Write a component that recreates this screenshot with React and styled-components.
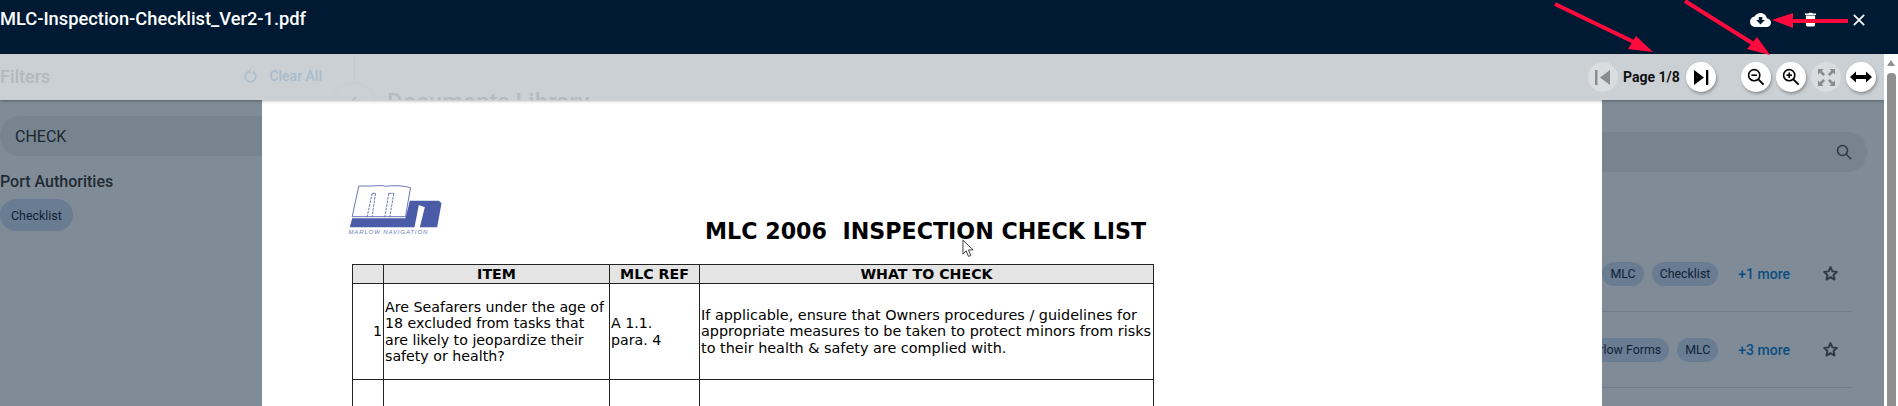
import React from "react";
import styled, { createGlobalStyle } from "styled-components";

const Global = createGlobalStyle`
  html, body { margin: 0; padding: 0; height: 100%; overflow: hidden; background: #7f8c97; }
  * { box-sizing: border-box; }
`;

const Screen = styled.div`
  position: relative; width: 1898px; height: 406px; overflow: hidden;
  display: flex; flex-direction: column; font-family: Roboto, sans-serif;
  background: #7f8c97;
`;
const TopBar = styled.header`
  height: 54px; flex: none; background: #001a33; color: #fff;
  display: flex; align-items: flex-start; padding: 6px 0 0 0;
`;
const FileName = styled.div`
  font-size: 18.3px; line-height: 25px; font-weight: 500; flex: 1;
`;
const TopIcons = styled.div`
  display: flex; align-items: center; height: 27px; margin-right: 33px; color: #fff;
`;
const CloudIcon = styled.svg`
  margin-right: 34px;
`;
const TrashIcon = styled.svg`
  margin-right: 37px;
`;
const Toolbar = styled.div`
  height: 46px; flex: none; background: #cbd0d5; display: flex; align-items: center;
  position: relative; z-index: 1; overflow: hidden; padding-right: 22px;
  box-shadow: 0 1px 3px rgba(0,0,0,.3);
`;
const FilterHead = styled.div`
  width: 354px; height: 100%; flex: none; display: flex; align-items: center;
  position: relative; padding-bottom: 3px;
  &::after {
    content: ""; position: absolute; right: -1px; top: 0; width: 1px; height: 26px; background: #c3c8cd;
  }
`;
const FilterTitle = styled.div`
  font-size: 18px; font-weight: 500; color: #b2b9bf; flex: 1; padding-top: 1px;
`;
const ClearAll = styled.div`
  display: flex; align-items: center; gap: 12px; font-size: 14px; font-weight: 500;
  color: #a9bccb; margin-right: 32px;
`;
const FaintTitle = styled.div`
  position: absolute; left: 387px; top: 34px; font-size: 24px; font-weight: 500; color: #b5bbc1;
  line-height: 28px; white-space: nowrap;
`;
const FaintBack = styled.div`
  position: absolute; left: 332px; top: 28px; width: 44px; height: 44px; border-radius: 50%;
  border: 1px solid #c7ccd1; color: #aebbc6; display: flex; align-items: center; justify-content: center;
`;
const Controls = styled.div`
  margin-left: auto; display: flex; align-items: center;
`;
const RoundButton = styled.button`
  width: 30px; height: 30px; border-radius: 50%; border: 0; padding: 0; flex: none;
  background: ${(p) => (p.$off ? "#dadde0" : "#fff")};
  color: ${(p) => (p.$off ? "#8c8c8c" : "#000")};
  box-shadow: ${(p) => (p.$off ? "none" : "1px 2px 3px rgba(0,0,0,.3)")};
  display: flex; align-items: center; justify-content: center;
  margin-left: ${(p) => p.$gap || 0}px;
`;
const PageLabel = styled.div`
  font-size: 14px; font-weight: 700; color: #111; width: 57px; margin: 0 6px 0 5px; white-space: nowrap;
`;
const Stage = styled.div`
  flex: 1; display: grid; grid-template-columns: 262px 1340px 1fr; min-height: 0; overflow: hidden;
`;
const LeftPane = styled.aside`
  display: flex; flex-direction: column; align-items: flex-start; overflow: hidden; padding-top: 16px;
`;
const SearchPill = styled.div`
  width: 320px; height: 40px; border-radius: 20px; background: #77838e; color: #1d2731;
  font-size: 16px; display: flex; align-items: center; padding-left: 15px; flex: none;
`;
const GroupTitle = styled.div`
  font-size: 16px; font-weight: 500; color: #1f2a35; margin-top: 15px; line-height: 22px;
`;
const Chip = styled.div`
  height: ${(p) => (p.$tall ? 32 : 24)}px; border-radius: 16px; background: #6a7c92; color: #0e2236;
  font-size: 12.4px; padding: 0 ${(p) => (p.$tall ? 11 : 8)}px; display: flex; align-items: center; flex: none;
  white-space: nowrap; margin-top: ${(p) => (p.$tall ? 6 : 0)}px;
`;
const RightPane = styled.section`
  display: flex; flex-direction: column; overflow: hidden; position: relative; padding-top: 32px;
`;
const SearchEnd = styled.div`
  width: 265px; height: 40px; flex: none; border-radius: 0 20px 20px 0;
  background: #77838e; display: flex; align-items: center; justify-content: flex-end;
  padding-right: 15px; color: #2e3a45; margin-bottom: 64px;
`;
const DocRow = styled.div`
  width: 249px; height: 76px; flex: none; border-bottom: 1px solid #6f7c89;
  display: flex; align-items: center; gap: 8px; overflow: hidden;
  justify-content: flex-end; color: #2e3a45;
`;
const More = styled.div`
  font-size: 14px; font-weight: 500; color: #0a4c80; margin: 0 24px 0 12px; white-space: nowrap;
`;
const Star = styled.div`
  display: flex; margin-right: 12px;
`;
const Scrollbar = styled.div`
  position: absolute; right: 0; top: 54px; bottom: 0; width: 14px; background: #fff; z-index: 2;
  display: flex; flex-direction: column; align-items: center; padding-top: 6px;
`;
const ScrollUp = styled.div`
  width: 0; height: 0; border-left: 4px solid transparent; border-right: 4px solid transparent;
  border-bottom: 6px solid #8f8f8f;
`;
const ScrollThumb = styled.div`
  width: 9px; flex: 1; margin-top: 7px; background: #8f8f8f; border-radius: 4px 4px 0 0;
`;
const PdfPage = styled.main`
  background: #fff; padding: 86px 0 0 90px; overflow: hidden;
  color: #000; font-family: "DejaVu Sans", sans-serif; position: relative;
`;
const Letterhead = styled.div`
  width: 801px; height: 79px; position: relative;
`;
const Logo = styled.svg`
  display: block; margin: -1px 0 0 -5px;
`;
const DocTitle = styled.h1`
  margin: 0; font-size: 22.2px; font-weight: 700; line-height: 26px; white-space: pre;
  position: absolute; left: 353px; top: 33px;
`;
const Table = styled.table`
  border-collapse: collapse; table-layout: fixed; width: 801px;
`;
const Col = styled.col`
  width: ${(p) => p.$w}px;
`;
const Th = styled.th`
  background: #e4e4e4; border: 1.4px solid #222; height: 19px; padding: 0;
  font-size: 14.2px; font-weight: 700; line-height: 16px; text-align: center;
`;
const Td = styled.td`
  border: 1.4px solid #222; height: 96px; padding: 0 1px; font-size: ${(p) => (p.$wide ? 14.4 : 14.2)}px;
  line-height: 16.5px; vertical-align: middle; text-align: ${(p) => (p.$right ? "right" : "left")};
  white-space: nowrap; overflow: hidden;
`;
const Arrows = styled.svg`
  position: absolute; left: 0; top: 0; pointer-events: none; z-index: 3;
`;
const CursorMark = styled.svg`
  position: absolute; left: 700px; top: 139px;
`;

const StarIcon = () => (
  <svg width="17" height="17" viewBox="0 0 24 24" fill="none" stroke="currentColor" strokeWidth="2.8" strokeLinejoin="round">
    <path d="M12 3l2.7 6 6.3.7-4.7 4.3 1.3 6.5L12 17.2 6.4 20.5l1.3-6.5L3 9.7 9.3 9z" />
  </svg>
);

const Glass = ({ sign }) => (
  <svg width="18" height="18" viewBox="0 0 18 18" fill="none" stroke="#000" strokeWidth="1.6">
    <circle cx="7.2" cy="7.2" r="5.6" />
    <path d="M11.4 11.4L16.6 16.6" strokeWidth="2" />
    <path d="M4.4 7.2h5.6" />
    {sign === "plus" && <path d="M7.2 4.4v5.6" />}
  </svg>
);

export default function App() {
  return (
    <Screen>
      <Global />
      <TopBar>
        <FileName>MLC-Inspection-Checklist_Ver2-1.pdf</FileName>
        <TopIcons>
          <CloudIcon width="21" height="14" viewBox="0 0 24 16" fill="#fff">
            <path d="M19.3 6C18.6 2.6 15.6 0 12 0 9.1 0 6.6 1.6 5.4 4 2.3 4.3 0 6.9 0 10c0 3.3 2.7 6 6 6h13c2.8 0 5-2.200 5-5 0-2.600-2.100-4.800-4.700-5z" />
            <path d="M14 8V4.500h-4V8H7l5 5 5-5z" fill="#001a33" />
          </CloudIcon>
          <TrashIcon width="11" height="15" viewBox="0 0 12 15" fill="#fff">
            <path d="M1 3h10v10.500a1.500 1.500 0 0 1-1.500 1.500h-7A1.500 1.500 0 0 1 1 13.500zM0 1h3.500l1-1h3l1 1H12v1.500H0z" />
          </TrashIcon>
          <svg width="12" height="12" viewBox="0 0 14 14" stroke="#fff" strokeWidth="1.9">
            <path d="M1 1l12 12M13 1L1 13" />
          </svg>
        </TopIcons>
      </TopBar>
      <Toolbar>
        <FilterHead>
          <FilterTitle>Filters</FilterTitle>
          <ClearAll>
            <svg width="13" height="15" viewBox="0 0 14 15" fill="none" stroke="#a9bccb" strokeWidth="1.6">
              <path d="M4.500 3.500a5.700 5.700 0 1 0 5 0" />
              <path d="M7.500 1L5 3.500l2.500 2" strokeWidth="1.2" />
            </svg>
            Clear All
          </ClearAll>
        </FilterHead>
        <FaintBack>
          <svg width="20" height="20" viewBox="0 0 20 20" fill="none" stroke="currentColor" strokeWidth="1.5"><path d="M12 3l-7 7 7 7" /></svg>
        </FaintBack>
        <FaintTitle>Documents Library</FaintTitle>
        <Controls>
          <RoundButton $off>
            <svg width="16" height="15" viewBox="0 0 16 15" fill="#8c8c8c"><path d="M0 0h2.500v15H0zM15 0v15L5 7.500z" /></svg>
          </RoundButton>
          <PageLabel>Page 1/8</PageLabel>
          <RoundButton>
            <svg width="16" height="15" viewBox="0 0 16 15" fill="#000"><path d="M1 0l10 7.500L1 15zM13 0h2.300v15H13z" /></svg>
          </RoundButton>
          <RoundButton $gap={25}><Glass sign="minus" /></RoundButton>
          <RoundButton $gap={5}><Glass sign="plus" /></RoundButton>
          <RoundButton $off $gap={5}>
            <svg width="19" height="19" viewBox="0 0 20 20" fill="#8c8c8c">
              <path d="M1 1h6L5 3l3.500 3.500-2 2L3 5 1 7zM19 1v6l-2-2-3.500 3.500-2-2L15 3l-2-2zM1 19v-6l2 2 3.500-3.500 2 2L5 17l2 2zM19 19h-6l2-2-3.500-3.500 2-2L17 15l2-2z" />
            </svg>
          </RoundButton>
          <RoundButton $gap={5}>
            <svg width="22" height="12" viewBox="0 0 22 12" fill="#000"><path d="M0 6l6-5.500V4h10V.5L22 6l-6 5.500V8H6v3.500z" /></svg>
          </RoundButton>
        </Controls>
      </Toolbar>
      <Stage>
        <LeftPane>
          <SearchPill>CHECK</SearchPill>
          <GroupTitle>Port Authorities</GroupTitle>
          <Chip $tall>Checklist</Chip>
        </LeftPane>
        <PdfPage>
          <Letterhead>
            <Logo width="97" height="50" viewBox="50 45 290 150">
              <path d="M85 48h45c10-2 30-2 35 1 20-3 55-3 75 4l-15 87H65z" fill="#fff" stroke="#4a5ba8" strokeWidth="2.5" />
              <path d="M125 70l-15 70M135 70l-10 70M175 70l-12 70M190 70l-12 70M125 70h10M175 70h15" fill="none" stroke="#4a5ba8" strokeWidth="2.5" strokeDasharray="8 3" />
              <path d="M65 145h160l13-53h87l8 8-13 72h-52l15-60-18-7-13 67H58z" fill="#4a5ba8" />
              <text x="54" y="191" fontSize="18" letterSpacing="2.6" fontStyle="italic" fontFamily="Liberation Sans, sans-serif" fill="#6d79b5">MARLOW NAVIGATION</text>
            </Logo>
            <DocTitle>MLC 2006  INSPECTION CHECK LIST</DocTitle>
          </Letterhead>
          <Table>
            <colgroup>
              <Col $w={31} /><Col $w={226} /><Col $w={90} /><Col $w={454} />
            </colgroup>
            <thead>
              <tr>
                <Th></Th><Th>ITEM</Th><Th>MLC REF</Th><Th>WHAT TO CHECK</Th>
              </tr>
            </thead>
            <tbody>
              <tr>
                <Td $right>1</Td>
                <Td>Are Seafarers under the age of<br />18 excluded from tasks that<br />are likely to jeopardize their<br />safety or health?</Td>
                <Td>A 1.1.<br />para. 4</Td>
                <Td $wide>If applicable, ensure that Owners procedures / guidelines for<br />appropriate measures to be taken to protect minors from risks<br />to their health &amp; safety are complied with.</Td>
              </tr>
              <tr><Td></Td><Td></Td><Td></Td><Td></Td></tr>
            </tbody>
          </Table>
          <CursorMark width="13" height="19" viewBox="0 0 14 20">
            <path d="M1 1v15l3.500-3.500 2.500 6 2.500-1-2.500-6H12z" fill="#fff" stroke="#333" strokeWidth="1" />
          </CursorMark>
        </PdfPage>
        <RightPane>
          <SearchEnd>
            <svg width="16" height="16" viewBox="0 0 16 16" fill="none" stroke="currentColor" strokeWidth="1.6">
              <circle cx="6.500" cy="6.500" r="5" /><path d="M10.200 10.200l5 5" />
            </svg>
          </SearchEnd>
          <DocRow>
            <Chip>MLC</Chip>
            <Chip>Checklist</Chip>
            <More>+1 more</More>
            <Star><StarIcon /></Star>
          </DocRow>
          <DocRow>
            <Chip>Marlow Forms</Chip>
            <Chip>MLC</Chip>
            <More>+3 more</More>
            <Star><StarIcon /></Star>
          </DocRow>
        </RightPane>
      </Stage>
      <Scrollbar><ScrollUp /><ScrollThumb /></Scrollbar>
      <Arrows width="1898" height="406" viewBox="0 0 1898 406" fill="#ff0a3c">
        <path d="M1555 4l85 41" stroke="#ff0a3c" strokeWidth="4" />
        <path d="M1653 52l-25-3 8-13z" />
        <path d="M1685 1l75 47" stroke="#ff0a3c" strokeWidth="4" />
        <path d="M1770 55l-23-6 10-12z" />
        <path d="M1848 21h-60" stroke="#ff0a3c" strokeWidth="4" />
        <path d="M1772 20l21-7v15z" />
      </Arrows>
    </Screen>
  );
}
